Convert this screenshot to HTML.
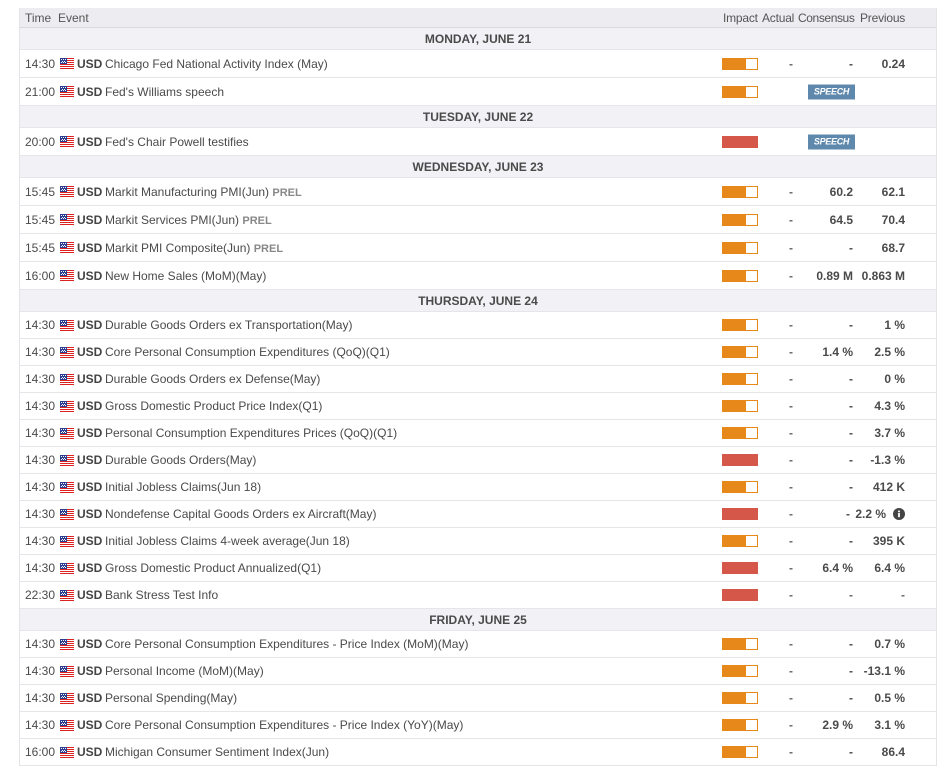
<!DOCTYPE html>
<html><head><meta charset="utf-8">
<style>
*{box-sizing:border-box;margin:0;padding:0}
body{width:944px;height:772px;background:#fff;font-family:"Liberation Sans",Arial,sans-serif;font-size:12px;color:#4a4a4a;position:relative;overflow:hidden}
#t{position:absolute;left:19px;top:8px;width:918px;border-left:1px solid #e3e3e8;border-right:1px solid #e3e3e8}
.r{position:relative;border-bottom:1px solid #e6e6ea;background:#fff}
.h{height:20px;background:#ededf1;border-bottom:1px solid #d8d8de;color:#555}
.d{background:#f2f2f6;text-align:center;font-weight:bold;color:#4a4a4a;font-size:12px}
.r span{position:absolute;top:50%;transform:translateY(-50%);white-space:nowrap}
.tm{left:5px}
.fl{left:40px;width:14px;height:11px}
.cu{left:57px;font-weight:bold;color:#444}
.ev{left:85px}
.p{color:#888;font-weight:bold;font-size:11px}
.im{left:702px;width:36px;height:12px}
.o{background:#e6891a;border:1px solid #e6891a}
.o::after{content:"";position:absolute;right:0;top:0;width:11px;height:10px;background:#fff}
.red{background:#d4574a}
.a{right:143px;text-align:right;font-weight:bold;color:#666}
.c{right:83px;text-align:right;font-weight:bold}
.pv{right:31px;text-align:right;font-weight:bold}
.sp{left:788px;width:47px;height:15px;background:#5f88ad;color:#fff;font-size:9px;font-weight:bold;font-style:italic;text-align:center;line-height:15px;letter-spacing:-0.3px}
</style></head><body>
<div id="t">
<div class="r h"><span style="left:5px">Time</span><span style="left:38px">Event</span><span style="left:703px;letter-spacing:-0.2px">Impact</span><span style="left:742px;letter-spacing:-0.2px">Actual</span><span style="left:778px;letter-spacing:-0.4px">Consensus</span><span style="left:840px;letter-spacing:-0.2px">Previous</span></div>
</div>
<svg width="0" height="0" style="position:absolute"><defs>
<g id="us" shape-rendering="crispEdges"><rect width="14" height="11" fill="#fff"/><rect y="0" width="14" height="1" fill="#d22"/><rect y="2" width="14" height="1" fill="#d22"/><rect y="4" width="14" height="1" fill="#d22"/><rect y="6" width="14" height="1" fill="#d22"/><rect y="8" width="14" height="1" fill="#d22"/><rect y="10" width="14" height="1" fill="#d22"/><rect width="7" height="6" fill="#2a3d8f"/><g fill="#fff"><rect x="1" y="1" width="1" height="1"/><rect x="3" y="1" width="1" height="1"/><rect x="5" y="1" width="1" height="1"/><rect x="2" y="3" width="1" height="1"/><rect x="4" y="3" width="1" height="1"/><rect x="1" y="4" width="1" height="1"/><rect x="3" y="4" width="1" height="1"/><rect x="5" y="4" width="1" height="1"/></g></g>
</defs></svg>
<div id="t2" style="position:absolute;left:19px;top:28px;width:918px;border-left:1px solid #e3e3e8;border-right:1px solid #e3e3e8">

<div class="r d" style="height:22px"><span style="left:0;right:0">MONDAY, JUNE 21</span></div>
<div class="r" style="height:28px"><span class="tm">14:30</span><svg class="fl" style="position:absolute;left:40px;top:8px"><use href="#us"/></svg><span class="cu">USD</span><span class="ev">Chicago Fed National Activity Index (May)</span><span class="im o"></span><span class="a">-</span><span class="c">-</span><span class="pv">0.24</span></div>
<div class="r" style="height:28px"><span class="tm">21:00</span><svg class="fl" style="position:absolute;left:40px;top:8px"><use href="#us"/></svg><span class="cu">USD</span><span class="ev">Fed's Williams speech</span><span class="im o"></span><span class="sp">SPEECH</span></div>

<div class="r d" style="height:22px"><span style="left:0;right:0">TUESDAY, JUNE 22</span></div>
<div class="r" style="height:28px"><span class="tm">20:00</span><svg class="fl" style="position:absolute;left:40px;top:8px"><use href="#us"/></svg><span class="cu">USD</span><span class="ev">Fed's Chair Powell testifies</span><span class="im red"></span><span class="sp">SPEECH</span></div>

<div class="r d" style="height:22px"><span style="left:0;right:0">WEDNESDAY, JUNE 23</span></div>
<div class="r" style="height:28px"><span class="tm">15:45</span><svg class="fl" style="position:absolute;left:40px;top:8px"><use href="#us"/></svg><span class="cu">USD</span><span class="ev">Markit Manufacturing PMI(Jun) <b class="p">PREL</b></span><span class="im o"></span><span class="a">-</span><span class="c">60.2</span><span class="pv">62.1</span></div>
<div class="r" style="height:28px"><span class="tm">15:45</span><svg class="fl" style="position:absolute;left:40px;top:8px"><use href="#us"/></svg><span class="cu">USD</span><span class="ev">Markit Services PMI(Jun) <b class="p">PREL</b></span><span class="im o"></span><span class="a">-</span><span class="c">64.5</span><span class="pv">70.4</span></div>
<div class="r" style="height:28px"><span class="tm">15:45</span><svg class="fl" style="position:absolute;left:40px;top:8px"><use href="#us"/></svg><span class="cu">USD</span><span class="ev">Markit PMI Composite(Jun) <b class="p">PREL</b></span><span class="im o"></span><span class="a">-</span><span class="c">-</span><span class="pv">68.7</span></div>
<div class="r" style="height:28px"><span class="tm">16:00</span><svg class="fl" style="position:absolute;left:40px;top:8px"><use href="#us"/></svg><span class="cu">USD</span><span class="ev">New Home Sales (MoM)(May)</span><span class="im o"></span><span class="a">-</span><span class="c">0.89 M</span><span class="pv">0.863 M</span></div>

<div class="r d" style="height:22px"><span style="left:0;right:0">THURSDAY, JUNE 24</span></div>
<div class="r" style="height:27px"><span class="tm">14:30</span><svg class="fl" style="position:absolute;left:40px;top:8px"><use href="#us"/></svg><span class="cu">USD</span><span class="ev">Durable Goods Orders ex Transportation(May)</span><span class="im o"></span><span class="a">-</span><span class="c">-</span><span class="pv">1 %</span></div>
<div class="r" style="height:27px"><span class="tm">14:30</span><svg class="fl" style="position:absolute;left:40px;top:8px"><use href="#us"/></svg><span class="cu">USD</span><span class="ev">Core Personal Consumption Expenditures (QoQ)(Q1)</span><span class="im o"></span><span class="a">-</span><span class="c">1.4 %</span><span class="pv">2.5 %</span></div>
<div class="r" style="height:27px"><span class="tm">14:30</span><svg class="fl" style="position:absolute;left:40px;top:8px"><use href="#us"/></svg><span class="cu">USD</span><span class="ev">Durable Goods Orders ex Defense(May)</span><span class="im o"></span><span class="a">-</span><span class="c">-</span><span class="pv">0 %</span></div>
<div class="r" style="height:27px"><span class="tm">14:30</span><svg class="fl" style="position:absolute;left:40px;top:8px"><use href="#us"/></svg><span class="cu">USD</span><span class="ev">Gross Domestic Product Price Index(Q1)</span><span class="im o"></span><span class="a">-</span><span class="c">-</span><span class="pv">4.3 %</span></div>
<div class="r" style="height:27px"><span class="tm">14:30</span><svg class="fl" style="position:absolute;left:40px;top:8px"><use href="#us"/></svg><span class="cu">USD</span><span class="ev">Personal Consumption Expenditures Prices (QoQ)(Q1)</span><span class="im o"></span><span class="a">-</span><span class="c">-</span><span class="pv">3.7 %</span></div>
<div class="r" style="height:27px"><span class="tm">14:30</span><svg class="fl" style="position:absolute;left:40px;top:8px"><use href="#us"/></svg><span class="cu">USD</span><span class="ev">Durable Goods Orders(May)</span><span class="im red"></span><span class="a">-</span><span class="c">-</span><span class="pv">-1.3 %</span></div>
<div class="r" style="height:27px"><span class="tm">14:30</span><svg class="fl" style="position:absolute;left:40px;top:8px"><use href="#us"/></svg><span class="cu">USD</span><span class="ev">Initial Jobless Claims(Jun 18)</span><span class="im o"></span><span class="a">-</span><span class="c">-</span><span class="pv">412 K</span></div>
<div class="r" style="height:27px"><span class="tm">14:30</span><svg class="fl" style="position:absolute;left:40px;top:8px"><use href="#us"/></svg><span class="cu">USD</span><span class="ev">Nondefense Capital Goods Orders ex Aircraft(May)</span><span class="im red"></span><span class="a">-</span><span class="c" style="right:86px">-</span><span class="pv" style="right:50px">2.2 %</span><svg style="position:absolute;left:873px;top:7px" width="12" height="12" viewBox="0 0 12 12"><circle cx="6" cy="6" r="6" fill="#444"/><rect x="5.1" y="5" width="1.8" height="4.2" fill="#fff"/><circle cx="6" cy="3.4" r="1" fill="#fff"/></svg></div>
<div class="r" style="height:27px"><span class="tm">14:30</span><svg class="fl" style="position:absolute;left:40px;top:8px"><use href="#us"/></svg><span class="cu">USD</span><span class="ev">Initial Jobless Claims 4-week average(Jun 18)</span><span class="im o"></span><span class="a">-</span><span class="c">-</span><span class="pv">395 K</span></div>
<div class="r" style="height:27px"><span class="tm">14:30</span><svg class="fl" style="position:absolute;left:40px;top:8px"><use href="#us"/></svg><span class="cu">USD</span><span class="ev">Gross Domestic Product Annualized(Q1)</span><span class="im red"></span><span class="a">-</span><span class="c">6.4 %</span><span class="pv">6.4 %</span></div>
<div class="r" style="height:27px"><span class="tm">22:30</span><svg class="fl" style="position:absolute;left:40px;top:8px"><use href="#us"/></svg><span class="cu">USD</span><span class="ev">Bank Stress Test Info</span><span class="im red"></span><span class="a">-</span><span class="c" style="color:#666">-</span><span class="pv" style="color:#666">-</span></div>

<div class="r d" style="height:22px"><span style="left:0;right:0">FRIDAY, JUNE 25</span></div>
<div class="r" style="height:27px"><span class="tm">14:30</span><svg class="fl" style="position:absolute;left:40px;top:8px"><use href="#us"/></svg><span class="cu">USD</span><span class="ev">Core Personal Consumption Expenditures - Price Index (MoM)(May)</span><span class="im o"></span><span class="a">-</span><span class="c">-</span><span class="pv">0.7 %</span></div>
<div class="r" style="height:27px"><span class="tm">14:30</span><svg class="fl" style="position:absolute;left:40px;top:8px"><use href="#us"/></svg><span class="cu">USD</span><span class="ev">Personal Income (MoM)(May)</span><span class="im o"></span><span class="a">-</span><span class="c">-</span><span class="pv">-13.1 %</span></div>
<div class="r" style="height:27px"><span class="tm">14:30</span><svg class="fl" style="position:absolute;left:40px;top:8px"><use href="#us"/></svg><span class="cu">USD</span><span class="ev">Personal Spending(May)</span><span class="im o"></span><span class="a">-</span><span class="c">-</span><span class="pv">0.5 %</span></div>
<div class="r" style="height:27px"><span class="tm">14:30</span><svg class="fl" style="position:absolute;left:40px;top:8px"><use href="#us"/></svg><span class="cu">USD</span><span class="ev">Core Personal Consumption Expenditures - Price Index (YoY)(May)</span><span class="im o"></span><span class="a">-</span><span class="c">2.9 %</span><span class="pv">3.1 %</span></div>
<div class="r" style="height:27px"><span class="tm">16:00</span><svg class="fl" style="position:absolute;left:40px;top:8px"><use href="#us"/></svg><span class="cu">USD</span><span class="ev">Michigan Consumer Sentiment Index(Jun)</span><span class="im o"></span><span class="a">-</span><span class="c">-</span><span class="pv">86.4</span></div>
</div>
</body></html>
